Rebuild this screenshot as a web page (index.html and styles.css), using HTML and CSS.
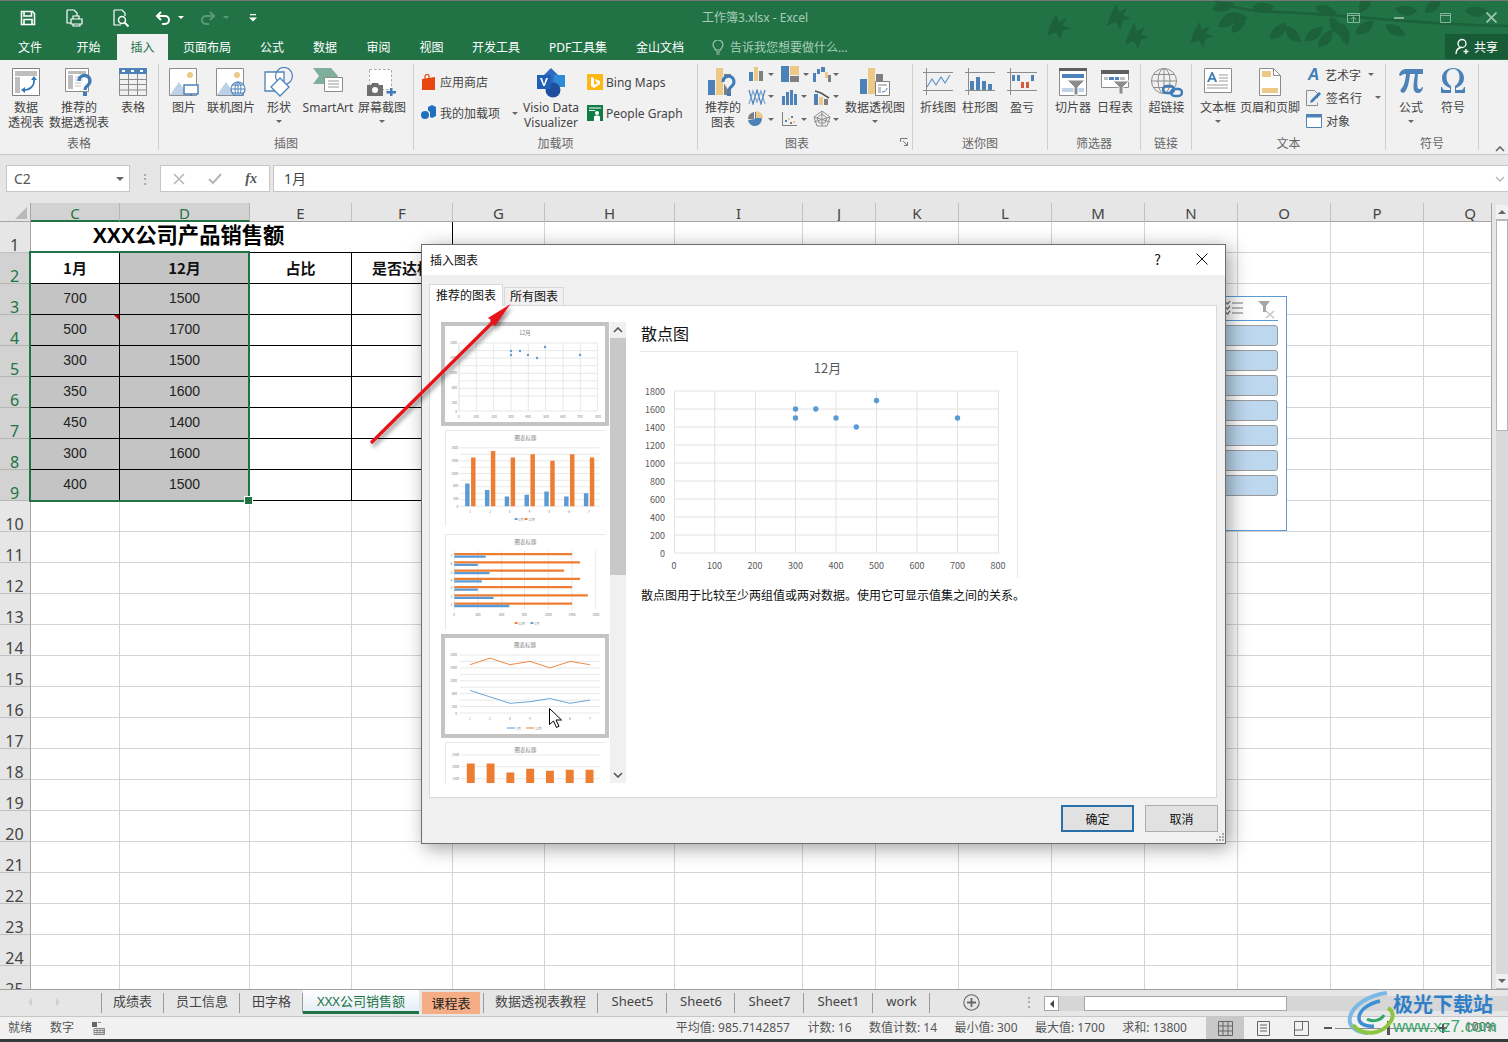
FILE: index.html
```html
<!DOCTYPE html>
<html lang="zh">
<head>
<meta charset="utf-8">
<title>工作簿3.xlsx - Excel</title>
<link rel="stylesheet" href="styles.css">
</head>
<body>
<div class="app">
  <svg class="leaves" viewBox="0 0 508 59" width="508" height="59" fill="#1c6139">
    <defs>
      <path id="bird" d="M0 0l6-12 3 8 8-4-4 7 8 4-8 1-3 10-4-8-9 4z"/>
      <path id="leaf" d="M0 0Q7-11 22-6 14 8 0 0z"/>
    </defs>
    <use href="#bird" x="50" y="25"/><use href="#bird" x="110" y="15"/><use href="#bird" x="128" y="34"/><use href="#bird" x="193" y="33"/>
    <path d="M215 0Q240 10 275 11T380 18T508 25" fill="none" stroke="#1c6139" stroke-width="2.5"/>
    <use href="#leaf" x="212" y="8"/><use href="#leaf" x="225" y="14" transform="rotate(25 225 14)"/><use href="#leaf" x="218" y="26" transform="rotate(-20 218 26)"/><use href="#leaf" x="232" y="32" transform="rotate(-40 232 32)"/><use href="#leaf" x="252" y="6" transform="rotate(15 252 6)"/><use href="#leaf" x="270" y="38" transform="rotate(-30 270 38)"/><use href="#leaf" x="285" y="25" transform="rotate(60 285 25)"/><use href="#leaf" x="315" y="6" transform="rotate(30 315 6)"/><use href="#leaf" x="330" y="16" transform="rotate(70 330 16)"/><use href="#leaf" x="342" y="22" transform="rotate(90 342 22)"/><use href="#leaf" x="305" y="40" transform="rotate(-25 305 40)"/><use href="#leaf" x="318" y="46" transform="rotate(-35 318 46)"/><use href="#leaf" x="355" y="33" transform="rotate(-20 355 33)"/><use href="#leaf" x="360" y="12" transform="rotate(-50 360 12)"/><use href="#leaf" x="395" y="8" transform="rotate(20 395 8)"/><use href="#leaf" x="425" y="12" transform="rotate(-30 425 12)"/><use href="#leaf" x="465" y="10" transform="rotate(15 465 10)"/><use href="#leaf" x="385" y="24" transform="rotate(40 385 24)"/>
  </svg>

  <header class="titlebar">
    <div class="qat">
      <span class="qa w46"><svg width="16" height="16" viewBox="0 0 16 16" fill="none" stroke="#fff" stroke-width="1.6"><path d="M1.500 1.500h11l2 2v11h-13z"/><path d="M4 1.500v4.500h7.500V1.500M4 14.500v-5h8v5"/></svg></span>
      <span class="qa w46"><svg width="17" height="18" viewBox="0 0 17 18" fill="none" stroke="#fff" stroke-width="1.200"><path d="M1 1h7l3 3v3M1 1v13h4"/><path d="M7 10V7h6v3M5 10h11v5H5zM7 15v2h7v-2"/></svg></span>
      <span class="qa w48"><svg width="17" height="18" viewBox="0 0 17 18" fill="none" stroke="#fff" stroke-width="1.200"><path d="M1 1h8l3 3v3M1 1v15h7"/><circle cx="9" cy="11" r="3.500" stroke-width="1.500"/><path d="M11.500 13.500l4 4" stroke-width="2"/></svg></span>
      <span class="qa undo"><svg width="16" height="14" viewBox="0 0 16 14" fill="none" stroke="#fff" stroke-width="2"><path d="M2 5h8a4 4 0 0 1 0 8H7"/><path d="M6 1L2 5l4 4"/></svg></span>
      <span class="qa w8"><i class="caret white"></i></span>
      <span class="qa redo"><svg width="16" height="14" viewBox="0 0 16 14" fill="none" stroke="#5a9a78" stroke-width="2"><path d="M14 5H6a4 4 0 0 0 0 8h3"/><path d="M10 1l4 4-4 4"/></svg></span>
      <span class="qa w8"><i class="caret dim"></i></span>
      <span class="qa custom"><svg width="8" height="8" viewBox="0 0 8 8" fill="#fff"><path d="M1 0h6v1.200H1zM0 3.500h8L4 7.500z"/></svg></span>
    </div>
    <div class="doctitle">工作簿3.xlsx - Excel</div>
    <div class="winbtns">
      <span class="wb"><svg width="13" height="10" viewBox="0 0 13 10" fill="none" stroke="#86b39b"><path d="M.5.500h12v9H.500zM.5 2.500h12M4 6l2.500-2L9 6M6.500 4v5"/></svg></span>
      <span class="wb"><svg width="10" height="2" viewBox="0 0 10 2" fill="#86b39b"><path d="M0 0h10v2H0z"/></svg></span>
      <span class="wb"><svg width="11" height="10" viewBox="0 0 11 10" fill="none" stroke="#86b39b"><path d="M.5.500h10v9H.500zM.5 2.500h10"/></svg></span>
      <span class="wb close"><svg width="11" height="11" viewBox="0 0 11 11" fill="none" stroke="#9cc3ae" stroke-width="1.800"><path d="M.5.500l10 10M10.500.500l-10 10"/></svg></span>
    </div>
  </header>

  <nav class="tabs">
    <span class="tab t60">文件</span><span class="tab t57">开始</span><span class="tab t51 on">插入</span><span class="tab t78">页面布局</span><span class="tab t52">公式</span><span class="tab t54">数据</span><span class="tab t53">审阅</span><span class="tab t53">视图</span><span class="tab t76">开发工具</span><span class="tab t88">PDF工具集</span><span class="tab t76">金山文档</span>
    <span class="tell"><svg width="12" height="15" viewBox="0 0 12 15" fill="none" stroke="#a8cdb8" stroke-width="1.100"><path d="M3.500 10C3 8 1 7 1 5a5 5 0 0 1 10 0c0 2-2 3-2.500 5zM4 12h4M4.500 14h3"/></svg>告诉我您想要做什么...</span>
    <span class="share"><svg width="16" height="17" viewBox="0 0 16 17" fill="none" stroke="#fff" stroke-width="1.300"><circle cx="7" cy="5.500" r="4"/><path d="M1 16c0-4 2.500-6 5-6.500M11 11v5M8.500 13.500h5"/></svg>共享</span>
  </nav>

  <section class="ribbon">
    <div class="group g1">
      <div class="gbody">
        <div class="big w44"><span class="ico"><svg width="28" height="28" viewBox="0 0 28 28"><path d="M.5.500h27v27H.500z" fill="#fff" stroke="#7f7f7f"/><path d="M3 3h22v5H3zM3 9h5v16H3z" fill="#bfbfbf"/><path d="M11 22c6 1 12-4 11-11" fill="none" stroke="#2f79b9" stroke-width="1.800"/><path d="M22 8l-3 4h6zM9 22l4-3v6z" fill="#2f79b9"/></svg></span><span class="lb">数据<br>透视表</span></div>
        <div class="big w62"><span class="ico"><svg width="28" height="28" viewBox="0 0 28 28"><path d="M.5.500h23v23H.500z" fill="#fff" stroke="#8c8c8c"/><path d="M3 3h18v3H3zM3 7h5v14H3z" fill="#bdbdbd"/><path d="M10 9h11M10 12h8M10 15h6M10 18h6" stroke="#bdbdbd"/><path d="M14 13a5.500 5.500 0 1 1 8.500 4.500c-2 1.500-2.500 2.500-2.500 4.500" fill="none" stroke="#3f7cb8" stroke-width="3.200"/><path d="M18 24h4v4h-4z" fill="#3f7cb8"/></svg></span><span class="lb">推荐的<br>数据透视表</span></div>
        <div class="big w46"><span class="ico"><svg width="28" height="28" viewBox="0 0 28 28"><path d="M0 0h28v6H0z" fill="#4d82b8"/><path d="M3 2h3v2H3zM12 2h3v2h-3zM21 2h3v2h-3z" fill="#fff"/><path d="M.5 6v21.500h27V6M.5 11.500h27M.5 16.500h27M.5 22h27M9.500 6v21M18.500 6v21" fill="none" stroke="#8c8c8c"/></svg></span><span class="lb">表格</span></div>
      </div>
      <div class="glabel">表格</div>
    </div>

    <div class="group g2">
      <div class="gbody">
        <div class="big w46"><span class="ico"><svg width="30" height="28" viewBox="0 0 30 28"><path d="M.5.500h27v27H.500z" fill="#fff" stroke="#8c8c8c"/><circle cx="21" cy="7" r="3" fill="#edc987"/><path d="M1 27l9-13 9 13z" fill="#bcd0e6"/><path d="M15 17h14v9H15z" fill="#fff" stroke="#4d82b8" stroke-width="1.500"/><path d="M21 26h2v2h3v.5h-8V28h3z" fill="#4d82b8"/></svg></span><span class="lb">图片</span></div>
        <div class="big w48"><span class="ico"><svg width="30" height="28" viewBox="0 0 30 28"><path d="M.5.500h27v27H.500z" fill="#fff" stroke="#8c8c8c"/><circle cx="21" cy="7" r="3" fill="#edc987"/><path d="M1 27l9-13 9 13z" fill="#bcd0e6"/><circle cx="22" cy="21" r="7" fill="#fff" stroke="#4d82b8" stroke-width="1.200"/><path d="M15 21h14M22 14v14M16.500 17h11M16.500 25h11" stroke="#4d82b8"/><ellipse cx="22" cy="21" rx="3" ry="7" fill="none" stroke="#4d82b8"/></svg></span><span class="lb">联机图片</span></div>
        <div class="big w48"><span class="ico up1"><svg width="30" height="30" viewBox="0 0 30 30"><path d="M1 5h19v19H1z" fill="#fff" stroke="#4d82b8" stroke-width="1.300"/><circle cx="20" cy="9" r="8.500" fill="none" stroke="#4d82b8" stroke-width="1.200"/><path d="M16 11l9 9-9 9-9-9z" fill="#fff" stroke="#4d82b8" stroke-width="1.300"/></svg></span><span class="lb">形状</span><i class="caret"></i></div>
        <div class="big w50"><span class="ico"><svg width="30" height="26" viewBox="0 0 30 26"><path d="M0 0h18l7 8-7 8H0l6-8z" fill="#7fae9b"/><path d="M11.500 9.500h18v14h-18z" fill="#fff" stroke="#8c8c8c"/><path d="M15 13h11M15 16h11M15 19h11" stroke="#9a9a9a"/></svg></span><span class="lb">SmartArt</span></div>
        <div class="big w58"><span class="ico"><svg width="30" height="28" viewBox="0 0 30 28"><path d="M2.500 1.500h22v20h-22z" fill="#fff" stroke="#aaa" stroke-dasharray="2.500 2"/><path d="M0 17h4l1-2h6l1 2h4v11H0z" fill="#6f6f6f"/><circle cx="8" cy="22" r="3" fill="#fff"/><path d="M23 20h2.500v3H29v2.500h-3.500V29H23v-3.500h-3.500V23H23z" fill="#3f7cb8"/></svg></span><span class="lb">屏幕截图</span><i class="caret"></i></div>
      </div>
      <div class="glabel">插图</div>
    </div>

    <div class="group g3">
      <div class="gbody">
        <div class="scol addins">
          <div class="sm"><svg width="16" height="16" viewBox="0 0 16 16"><path d="M1 5l13-2v13H1z" fill="#e8470f"/><path d="M4 6V2.500a2 2 0 0 1 4 0V5" fill="none" stroke="#e8470f" stroke-width="1.200"/></svg>应用商店</div>
          <div class="sm"><svg width="16" height="16" viewBox="0 0 16 16" fill="#1e6fc0"><path d="M7 2l4-2 4 2v9l-4 2-2-1V7L7 5.500z"/><circle cx="4" cy="10" r="4"/></svg>我的加载项<i class="caret sp"></i></div>
        </div>
        <div class="big w60"><span class="ico"><svg width="30" height="30" viewBox="0 0 30 30"><path d="M15 0l9 9-9 9-9-9z" fill="#2f6cc0"/><path d="M18 7h11v12H18z" fill="#2e8bd8"/><circle cx="17" cy="22" r="7.500" fill="#1d4f9c"/><path d="M1 7h14v14H1z" fill="#1f5fb5"/><path d="M4 10h2l2 6 2-6h2l-3.200 8H7.200z" fill="#fff"/></svg></span><span class="lb">Visio Data<br>Visualizer</span></div>
        <div class="scol maps">
          <div class="sm"><svg width="16" height="16" viewBox="0 0 16 16"><path d="M0 0h16v16H0z" fill="#fdb813"/><path d="M4 3l3 1v7l4-2-2-1-1-3 5 2v3l-6 4-3-2z" fill="#fff"/></svg>Bing Maps</div>
          <div class="sm"><svg width="16" height="16" viewBox="0 0 16 16"><path d="M0 0h16v16H0z" fill="#0f7b46"/><path d="M2 3h12M2 5.500h6" stroke="#fff"/><circle cx="10" cy="8" r="2" fill="#fff"/><path d="M7 16v-4c0-1 1-1.500 3-1.500s3 .5 3 1.500v4z" fill="#fff"/></svg>People Graph</div>
        </div>
      </div>
      <div class="glabel">加载项</div>
    </div>

    <div class="group g4">
      <div class="gbody">
        <div class="big w50"><span class="ico"><svg width="30" height="28" viewBox="0 0 30 28"><path d="M0 12h7v15H0z" fill="#4d82b8"/><path d="M8 0h7v27H8z" fill="#edc987"/><path d="M16 6h7v21h-7z" fill="#7f7f7f"/><path d="M15 14a5.500 5.500 0 1 1 9 4c-2 1.500-3 2.500-3 5" fill="#f1f1f1" stroke="#3f7cb8" stroke-width="3"/><path d="M19 24.500h4V28h-4z" fill="#3f7cb8"/></svg></span><span class="lb">推荐的<br>图表</span></div>
        <div class="minis">
          <div class="mini"><svg width="18" height="16" viewBox="0 0 18 16"><path d="M1 6h4v9H1z" fill="#4d82b8"/><path d="M6 1h4v14H6z" fill="#edc987"/><path d="M11 5h4v10h-4z" fill="#7f7f7f"/></svg><i class="caret"></i></div>
          <div class="mini"><svg width="20" height="16" viewBox="0 0 20 16"><path d="M0 0h8v16H0z" fill="#4d82b8"/><path d="M9 0h9v9H9z" fill="#edc987"/><path d="M9 10h9v6H9z" fill="#7f7f7f"/></svg><i class="caret"></i></div>
          <div class="mini"><svg width="18" height="16" viewBox="0 0 18 16"><path d="M0 7h3v9H0z" fill="#4d82b8"/><path d="M4 3h3v5H4z" fill="#4d82b8"/><path d="M8 1h4v5H8z" fill="#4d82b8"/><path d="M12 6h3v6h-3z" fill="#edc987"/><path d="M15 9h3v7h-3z" fill="#7f7f7f"/></svg><i class="caret"></i></div>
          <div class="mini"><svg width="18" height="16" viewBox="0 0 18 16" fill="none" stroke="#4d82b8" stroke-width="1.200"><path d="M1 1l4 14 4-14 4 14 4-14"/><path d="M1 15L5 2l4 11 4-11 4 13" stroke="#7aa6d6"/></svg><i class="caret"></i></div>
          <div class="mini"><svg width="18" height="16" viewBox="0 0 18 16" fill="#4d82b8"><path d="M1 7h3v9H1zM5 3h3v13H5zM9 1h3v15H9zM13 5h3v11h-3z"/></svg><i class="caret"></i></div>
          <div class="mini"><svg width="18" height="16" viewBox="0 0 18 16"><path d="M1 5h4v11H1z" fill="#4d82b8"/><path d="M6 8h4v8H6z" fill="#edc987"/><path d="M11 10h4v6h-4z" fill="#7f7f7f"/><path d="M2 2l6 2 8 5" fill="none" stroke="#555" stroke-width="1.500"/></svg><i class="caret"></i></div>
          <div class="mini"><svg width="18" height="16" viewBox="0 0 18 16"><path d="M7 1a7 7 0 1 1-7 8l7-1z" fill="#4d82b8"/><path d="M8 0a7 7 0 0 1 7 7H8z" fill="#edc987"/><path d="M0 8a7 7 0 0 1 6-7v7z" fill="#7f7f7f"/></svg><i class="caret"></i></div>
          <div class="mini"><svg width="18" height="16" viewBox="0 0 18 16"><path d="M1.500 1v13.500H16" fill="none" stroke="#7f7f7f"/><path d="M4 9h2v2H4zM10 5h2v2h-2z" fill="#4d82b8"/><path d="M7 7h2v2H7zM12 10h2v2h-2z" fill="#edc987"/><path d="M9 11h2v2H9z" fill="#7f7f7f"/></svg><i class="caret"></i></div>
          <div class="mini"><svg width="18" height="16" viewBox="0 0 18 16" fill="none" stroke="#8c8c8c"><path d="M9 0l8 6-3 9H4L1 6zM9 3l5 4-2 5H6L4 7zM9 0v15M1 6l16 5M17 6L1 11"/></svg><i class="caret"></i></div>
        </div>
        <div class="big w58"><span class="ico"><svg width="30" height="28" viewBox="0 0 30 28"><path d="M0 11h7v15H0z" fill="#4d82b8"/><path d="M8 0h7v26H8z" fill="#edc987"/><path d="M16 6h7v9h-7z" fill="#7f7f7f"/><path d="M15.500 13.500h14v14h-14z" fill="#fff" stroke="#7f7f7f"/><path d="M18 16h9v2h-9zM18 19h3v6h-3z" fill="#bfbfbf"/><path d="M22 24c3 0 5-2 5-4" fill="none" stroke="#3f7cb8"/></svg></span><span class="lb">数据透视图</span><i class="caret"></i></div>
        <svg class="launch" width="8" height="8" viewBox="0 0 8 8" fill="none" stroke="#777"><path d="M.5 4V.5H7.500M3 3l4 4M4 7.500h3.500V4"/></svg>
      </div>
      <div class="glabel shifted">图表</div>
    </div>

    <div class="group g5">
      <div class="gbody">
        <div class="big w42"><span class="ico"><svg width="30" height="27" viewBox="0 0 30 27" fill="none"><path d="M0 4.500h30M0 22.500h30M3.500 0v27" stroke="#8c8c8c"/><path d="M4 19l5-8 4 6 5-8 4 6 5-8" stroke="#5a90c8" stroke-width="1.100"/></svg></span><span class="lb">折线图</span></div>
        <div class="big w42"><span class="ico"><svg width="30" height="27" viewBox="0 0 30 27"><path d="M0 4.500h30M0 22.500h30M3.500 0v27" fill="none" stroke="#8c8c8c"/><path d="M5 13h4v9H5zM11 9h4v13h-4zM17 13h4v9h-4zM23 16h4v6h-4z" fill="#4d82b8"/></svg></span><span class="lb">柱形图</span></div>
        <div class="big w42"><span class="ico"><svg width="30" height="27" viewBox="0 0 30 27"><path d="M0 4.500h30M0 22.500h30M3.500 0v27" fill="none" stroke="#8c8c8c"/><path d="M5 7h3v6H5zM10 7h3v6h-3zM24 7h3v6h-3z" fill="#4d82b8"/><path d="M14 14h3v6h-3zM19 14h3v6h-3z" fill="#d9593c"/></svg></span><span class="lb">盈亏</span></div>
      </div>
      <div class="glabel">迷你图</div>
    </div>

    <div class="group g6">
      <div class="gbody">
        <div class="big w42"><span class="ico"><svg width="28" height="28" viewBox="0 0 28 28"><path d="M.5.500h27v27H.500z" fill="#fff" stroke="#8c8c8c"/><path d="M0 0h28v3H0z" fill="#5f5f5f"/><path d="M3 6h22v4H3z" fill="#4d82b8"/><path d="M3 20h22v4H3z" fill="#bfd3e8"/><path d="M8 12h18l-7 7v8h-4v-8z" fill="#8c8c8c" stroke="#fff"/></svg></span><span class="lb">切片器</span></div>
        <div class="big w42"><span class="ico"><svg width="28" height="26" viewBox="0 0 28 26"><path d="M.5 3.500h27v16H.500z" fill="#fff" stroke="#8c8c8c"/><path d="M0 2h28v4H0z" fill="#5f5f5f"/><path d="M3 9h4v3H3z" fill="#bfbfbf"/><path d="M8 9h5v3H8zM14 9h4v3h-4z" fill="#4d82b8"/><path d="M19 9h5v3h-5z" fill="#bfbfbf"/><path d="M12 13h16l-6 6v7h-4v-7z" fill="#8c8c8c" stroke="#f1f1f1"/></svg></span><span class="lb">日程表</span></div>
      </div>
      <div class="glabel">筛选器</div>
    </div>

    <div class="group g7">
      <div class="gbody">
        <div class="big w49"><span class="ico"><svg width="32" height="30" viewBox="0 0 32 30" fill="none"><g stroke="#8c8c8c"><circle cx="13" cy="13" r="12.500"/><ellipse cx="13" cy="13" rx="6" ry="12.500"/><path d="M13 0v26M.5 13h25M2.500 6.500h21M2.500 19.500h21"/></g><rect x="12" y="18" width="11" height="7" rx="3.500" stroke="#3f7cb8" stroke-width="2.500"/><rect x="20" y="21" width="11" height="7" rx="3.500" stroke="#3f7cb8" stroke-width="2.500"/></svg></span><span class="lb">超链接</span></div>
      </div>
      <div class="glabel">链接</div>
    </div>

    <div class="group g8">
      <div class="gbody">
        <div class="big w44"><span class="ico"><svg width="28" height="25" viewBox="0 0 28 25"><path d="M.5.500h27v24H.500z" fill="#fff" stroke="#8c8c8c"/><path d="M15 7h9M15 10h9M15 13h9M3 17h21M3 20h21" stroke="#9a9a9a"/><path d="M7.500 4L3 14h2.200l.9-2.200h4l.9 2.200h2.200L8.800 4zM6.800 10l1.300-3.300L9.400 10z" fill="#3f7cb8"/></svg></span><span class="lb">文本框</span><i class="caret"></i></div>
        <div class="big w60"><span class="ico"><svg width="22" height="28" viewBox="0 0 22 28"><path d="M.5.500h14l7 7v20H.500z" fill="#fff" stroke="#8c8c8c"/><path d="M14.500.5v7h7" fill="none" stroke="#8c8c8c"/><path d="M3 3h9v6H3zM3 20h16v5H3z" fill="#edc987"/></svg></span><span class="lb">页眉和页脚</span></div>
        <div class="scol texts">
          <div class="sm"><span class="wa">A</span>艺术字<i class="caret sp1"></i></div>
          <div class="sm"><svg width="16" height="16" viewBox="0 0 16 16" fill="none"><path d="M.5.500h8l3 3V8M.5.500v15h11v-3" stroke="#8c8c8c"/><path d="M4 13l1-3 8-8 2 2-8 8z" fill="#3f7cb8"/></svg>签名行<i class="caret sp2"></i></div>
          <div class="sm"><svg width="16" height="14" viewBox="0 0 16 14"><path d="M.5.500h15v13H.500z" fill="#fff" stroke="#4d82b8"/><path d="M0 0h16v3.500H0z" fill="#4d82b8"/></svg>对象</div>
        </div>
      </div>
      <div class="glabel">文本</div>
    </div>

    <div class="group g9">
      <div class="gbody">
        <div class="big w42"><span class="ico"><svg width="26" height="26" viewBox="0 0 26 26" fill="#4d82b8"><path d="M1 7C2 3 5 1 8 1h17v5h-5c-.5 5-1 9-.5 13 .2 1.500 1 2 2 2 1 0 2-.5 2.500-2h1c-.5 4-2.500 6-5 6-3 0-4.500-2-4.500-6 0-4 .8-9 1.500-13h-5c-.5 6-2 14-5 18-1 1-3 1-4 0s-.5-3 1-4c2-2 3.500-8 4-14H7c-2 0-3.500 1-4.500 2z"/></svg></span><span class="lb">公式</span><i class="caret"></i></div>
        <div class="big w42"><span class="ico"><svg width="26" height="26" viewBox="0 0 26 26" fill="#4d82b8"><path d="M1 25v-6h1c.5 2 1.500 3 3 3h5v-2C5 18 2 15 2 10 2 4 7 0 13 0s11 4 11 10c0 5-3 8-8 10v2h5c1.500 0 2.500-1 3-3h1v6H15v-7c3-2 4.500-5 4.500-9 0-5-2.500-8-6.500-8S6.500 4 6.500 9c0 4 1.500 7 4.500 9v7z"/></svg></span><span class="lb">符号</span></div>
      </div>
      <div class="glabel">符号</div>
    </div>
    <svg class="collapse" width="10" height="6" viewBox="0 0 10 6" fill="none" stroke="#666" stroke-width="1.600"><path d="M1 5l4-4 4 4"/></svg>
  </section>

  <section class="formula">
    <div class="namebox">C2<i class="caret"></i></div>
    <div class="fdots">⋮</div>
    <div class="fxbox">
      <svg width="12" height="12" viewBox="0 0 12 12" fill="none" stroke="#b5b5b5" stroke-width="1.500"><path d="M1 1l10 10M11 1L1 11"/></svg>
      <svg width="14" height="12" viewBox="0 0 14 12" fill="none" stroke="#b5b5b5" stroke-width="2"><path d="M1 6l4 4 8-9"/></svg>
      <span class="fx">fx</span>
    </div>
    <div class="finput"><span class="ftext">1月</span><svg width="10" height="6" viewBox="0 0 10 6" fill="none" stroke="#bbb" stroke-width="1.500"><path d="M1 1l4 4 4-4"/></svg></div>
  </section>

  <main class="sheetarea">
    <div class="sheet">
      <div class="corner"><svg width="12" height="12" viewBox="0 0 12 12" fill="#b9b9b9"><path d="M12 0v12H0z"/></svg></div>
      <div class="ch sel">C</div><div class="ch sel">D</div><div class="ch">E</div><div class="ch">F</div><div class="ch">G</div><div class="ch">H</div><div class="ch">I</div><div class="ch">J</div><div class="ch">K</div><div class="ch">L</div><div class="ch">M</div><div class="ch">N</div><div class="ch">O</div><div class="ch">P</div><div class="ch">Q</div>

      <div class="rh">1</div><b class="headline">XXX公司产品销售额</b><i class="f1"></i><i></i><i></i><i></i><i></i><i></i><i></i><i></i><i></i><i></i><i></i><i></i>
      <div class="rh sel">2</div><b class="k">1月</b><b class="k g">12月</b><b class="k">占比</b><b class="k nw">是否达标</b><i></i><i></i><i></i><i></i><i></i><i></i><i></i><i></i><i></i><i></i><i></i>
      <div class="rh sel">3</div><span class="k g">700</span><span class="k g">1500</span><i class="k"></i><i class="k"></i><i></i><i></i><i></i><i></i><i></i><i></i><i></i><i></i><i></i><i></i><i></i>
      <div class="rh sel">4</div><span class="k g note">500</span><span class="k g">1700</span><i class="k"></i><i class="k"></i><i></i><i></i><i></i><i></i><i></i><i></i><i></i><i></i><i></i><i></i><i></i>
      <div class="rh sel">5</div><span class="k g">300</span><span class="k g">1500</span><i class="k"></i><i class="k"></i><i></i><i></i><i></i><i></i><i></i><i></i><i></i><i></i><i></i><i></i><i></i>
      <div class="rh sel">6</div><span class="k g">350</span><span class="k g">1600</span><i class="k"></i><i class="k"></i><i></i><i></i><i></i><i></i><i></i><i></i><i></i><i></i><i></i><i></i><i></i>
      <div class="rh sel">7</div><span class="k g">450</span><span class="k g">1400</span><i class="k"></i><i class="k"></i><i></i><i></i><i></i><i></i><i></i><i></i><i></i><i></i><i></i><i></i><i></i>
      <div class="rh sel">8</div><span class="k g">300</span><span class="k g">1600</span><i class="k"></i><i class="k"></i><i></i><i></i><i></i><i></i><i></i><i></i><i></i><i></i><i></i><i></i><i></i>
      <div class="rh sel">9</div><span class="k g">400</span><span class="k g">1500</span><i class="k"></i><i class="k"></i><i></i><i></i><i></i><i></i><i></i><i></i><i></i><i></i><i></i><i></i><i></i>
      <div class="rh">10</div><i></i><i></i><i></i><i></i><i></i><i></i><i></i><i></i><i></i><i></i><i></i><i></i><i></i><i></i><i></i>
      <div class="rh">11</div><i></i><i></i><i></i><i></i><i></i><i></i><i></i><i></i><i></i><i></i><i></i><i></i><i></i><i></i><i></i>
      <div class="rh">12</div><i></i><i></i><i></i><i></i><i></i><i></i><i></i><i></i><i></i><i></i><i></i><i></i><i></i><i></i><i></i>
      <div class="rh">13</div><i></i><i></i><i></i><i></i><i></i><i></i><i></i><i></i><i></i><i></i><i></i><i></i><i></i><i></i><i></i>
      <div class="rh">14</div><i></i><i></i><i></i><i></i><i></i><i></i><i></i><i></i><i></i><i></i><i></i><i></i><i></i><i></i><i></i>
      <div class="rh">15</div><i></i><i></i><i></i><i></i><i></i><i></i><i></i><i></i><i></i><i></i><i></i><i></i><i></i><i></i><i></i>
      <div class="rh">16</div><i></i><i></i><i></i><i></i><i></i><i></i><i></i><i></i><i></i><i></i><i></i><i></i><i></i><i></i><i></i>
      <div class="rh">17</div><i></i><i></i><i></i><i></i><i></i><i></i><i></i><i></i><i></i><i></i><i></i><i></i><i></i><i></i><i></i>
      <div class="rh">18</div><i></i><i></i><i></i><i></i><i></i><i></i><i></i><i></i><i></i><i></i><i></i><i></i><i></i><i></i><i></i>
      <div class="rh">19</div><i></i><i></i><i></i><i></i><i></i><i></i><i></i><i></i><i></i><i></i><i></i><i></i><i></i><i></i><i></i>
      <div class="rh">20</div><i></i><i></i><i></i><i></i><i></i><i></i><i></i><i></i><i></i><i></i><i></i><i></i><i></i><i></i><i></i>
      <div class="rh">21</div><i></i><i></i><i></i><i></i><i></i><i></i><i></i><i></i><i></i><i></i><i></i><i></i><i></i><i></i><i></i>
      <div class="rh">22</div><i></i><i></i><i></i><i></i><i></i><i></i><i></i><i></i><i></i><i></i><i></i><i></i><i></i><i></i><i></i>
      <div class="rh">23</div><i></i><i></i><i></i><i></i><i></i><i></i><i></i><i></i><i></i><i></i><i></i><i></i><i></i><i></i><i></i>
      <div class="rh">24</div><i></i><i></i><i></i><i></i><i></i><i></i><i></i><i></i><i></i><i></i><i></i><i></i><i></i><i></i><i></i>
      <div class="rh">25</div><i></i><i></i><i></i><i></i><i></i><i></i><i></i><i></i><i></i><i></i><i></i><i></i><i></i><i></i><i></i>

      <div class="selection"><span class="handle"></span></div>

      <aside class="slicer">
        <div class="slhead">
          <svg width="17" height="14" viewBox="0 0 17 14" fill="none" stroke="#777"><path d="M6 2h11M6 7h11M6 12h11"/><path d="M0 1.500l1.500 1.500L4 0M0 6.500L1.500 8 4 5M0 11.500L1.500 13 4 10" stroke-width="1.300"/></svg>
          <svg width="17" height="18" viewBox="0 0 17 18"><path d="M0 0h12L8 5v6H5V5z" fill="#a6a6a6"/><path d="M8 10l8 7M16 10l-8 7" stroke="#c0c0c0" stroke-width="1.300"/></svg>
        </div>
        <div class="slitem"></div><div class="slitem"></div><div class="slitem"></div><div class="slitem"></div><div class="slitem"></div><div class="slitem"></div><div class="slitem"></div>
      </aside>
    </div>
    <div class="vscroll">
      <div class="vbtn"><i class="tri up"></i></div>
      <div class="vthumb"></div>
      <div class="vtrack"></div>
      <div class="vbtn"><i class="tri"></i></div>
    </div>
  </main>

  <section class="tabbar">
    <div class="tabnav"><i class="tri left"></i><i class="tri right"></i></div>
    <div class="sheets">
      <span class="st s63 first">成绩表</span><span class="st s76">员工信息</span><span class="st s63">田字格</span><span class="st s116 active">XXX公司销售额</span><span class="st s58 orange">课程表</span><span class="st s115 first">数据透视表教程</span><span class="st s69">Sheet5</span><span class="st s68">Sheet6</span><span class="st s69">Sheet7</span><span class="st s69">Sheet1</span><span class="st s57">work</span>
    </div>
    <svg class="addsheet" width="17" height="17" viewBox="0 0 17 17" fill="none" stroke="#666"><circle cx="8.500" cy="8.500" r="7.700" stroke-width="1.100"/><path d="M8.500 4v9M4 8.500h9" stroke-width="1.800"/></svg>
    <div class="tdots">⋮</div>
    <div class="hscroll">
      <div class="hbtn"><i class="tri left dark"></i></div>
      <div class="hgap"></div>
      <div class="hthumb"></div>
    </div>
  </section>

  <footer class="status">
    <span class="stleft">就绪</span><span class="stleft">数字</span>
    <svg class="macro" width="13" height="13" viewBox="0 0 13 13"><path d="M0 0h5v5H0z" fill="#666"/><path d="M2 6.500h10.500v6H2zM6 .5h3M2 8.500h10M2 10.500h10M5 6.500v6M8 6.500v6M11 6.500v6" fill="none" stroke="#888"/></svg>
    <div class="stats"><span>平均值: 985.7142857</span><span>计数: 16</span><span>数值计数: 14</span><span>最小值: 300</span><span>最大值: 1700</span><span>求和: 13800</span></div>
    <div class="views">
      <span class="vw on"><svg width="15" height="15" viewBox="0 0 15 15" fill="none" stroke="#666"><path d="M.5.500h14v14H.500zM.5 5h14M.5 10h14M5 .5v14M10 .5v14"/></svg></span>
      <span class="vw"><svg width="13" height="15" viewBox="0 0 13 15" fill="none" stroke="#666"><path d="M.5.500h12v14H.500zM3 4h7M3 7h7M3 10h7"/></svg></span>
      <span class="vw"><svg width="15" height="15" viewBox="0 0 15 15" fill="none" stroke="#666"><path d="M.5.500h14v14H.500zM.5 9h8V.5"/></svg></span>
    </div>
    <div class="zoomer"><i class="zminus"></i><div class="zline"><i class="zthumb"></i></div><i class="zplus"></i><span class="zpct">100%</span></div>
  </footer>
  <div class="bottomline"></div>

  <div class="dialog">
    <div class="dtitle"><span class="dname">插入图表</span><span class="dq">?</span><svg width="12" height="12" viewBox="0 0 12 12" fill="none" stroke="#111"><path d="M.5.500l11 11M11.500.500l-11 11"/></svg></div>
    <div class="dbody">
      <div class="dtabs"><span class="dtab on">推荐的图表</span><span class="dtab">所有图表</span></div>
      <div class="dpanel">
        <div class="listwrap">
          <div class="list">
            <div class="thumb on">
              <svg viewBox="0 0 160 96" width="160" height="96" class="mini-chart">
                <path d="M14 17h139M14 24.600h139M14 32h139M14 39.700h139M14 47.300h139M14 54.800h139M14 62.400h139M14 70h139M14 85h139" stroke="#e8e8e8" fill="none"/>
                <path d="M31.300 17v68M48.600 17v68M66 17v68M83.300 17v68M100.600 17v68M118 17v68M135.300 17v68M152.600 17v68" stroke="#e8e8e8" fill="none"/>
                <path d="M14 17v68" stroke="#ddd"/>
                <text x="80" y="9" class="tt">12月</text>
                <text x="12" y="18" class="ty">1800</text><text x="12" y="33" class="ty">1400</text><text x="12" y="48" class="ty">1000</text><text x="12" y="63" class="ty">600</text><text x="12" y="78" class="ty">200</text><text x="12" y="87" class="ty">0</text>
                <text x="14" y="92" class="tx">0</text><text x="31" y="92" class="tx">100</text><text x="49" y="92" class="tx">200</text><text x="66" y="92" class="tx">300</text><text x="83" y="92" class="tx">400</text><text x="101" y="92" class="tx">500</text><text x="118" y="92" class="tx">600</text><text x="135" y="92" class="tx">700</text><text x="153" y="92" class="tx">800</text>
                <g fill="#5b9bd5"><circle cx="66" cy="25" r="1.200"/><circle cx="66" cy="29" r="1.200"/><circle cx="75" cy="25" r="1.200"/><circle cx="83" cy="29" r="1.200"/><circle cx="92" cy="32" r="1.200"/><circle cx="100" cy="21" r="1.200"/><circle cx="135" cy="29" r="1.200"/></g>
              </svg>
            </div>
            <div class="thumb">
              <svg viewBox="0 0 160 96" width="160" height="96" class="mini-chart">
                <path d="M14 17h141M14 23.500h141M14 30h141M14 36.700h141M14 43h141M14 49.800h141M14 56.300h141M14 63h141M14 69.400h141M14 76h141" stroke="#e8e8e8" fill="none"/>
                <text x="80" y="9" class="tt">图表标题</text>
                <text x="12" y="18" class="ty">1800</text><text x="12" y="31" class="ty">1400</text><text x="12" y="44" class="ty">1000</text><text x="12" y="57" class="ty">600</text><text x="12" y="70" class="ty">200</text><text x="12" y="78" class="ty">0</text>
                <text x="24" y="83" class="tx">1</text><text x="44" y="83" class="tx">2</text><text x="64" y="83" class="tx">3</text><text x="84" y="83" class="tx">4</text><text x="104" y="83" class="tx">5</text><text x="124" y="83" class="tx">6</text><text x="144" y="83" class="tx">7</text>
                <g fill="#5b9bd5"><path d="M19 53.100h4.500V76H19zM39 59.600h4.500V76H39zM59 66.200h4.500V76H59zM79 64.500h4.500V76H79zM99 61.200h4.500V76H99zM119 66.200h4.500V76H119zM139 62.900h4.500V76H139z"/></g>
                <g fill="#ed7d31"><path d="M25 26.800h4.500V76H25zM45 20.300h4.500V76H45zM65 26.800h4.500V76H65zM85 23.600h4.500V76H85zM105 30.100h4.500V76H105zM125 23.600h4.500V76H125zM145 26.800h4.500V76H145z"/></g>
                <path d="M69 88h3v2h-3z" fill="#5b9bd5"/><path d="M79 88h3v2h-3z" fill="#ed7d31"/><text x="73" y="91" class="tl">1月</text><text x="83" y="91" class="tl">12月</text>
              </svg>
            </div>
            <div class="thumb">
              <svg viewBox="0 0 160 96" width="160" height="96" class="mini-chart">
                <path d="M8 16v59M32 16v59M56 16v59M79 16v59M103 16v59M127 16v59M151 16v59" stroke="#e8e8e8" fill="none"/>
                <text x="80" y="9" class="tt">图表标题</text>
                <text x="5" y="22" class="tx">7</text><text x="5" y="30" class="tx">6</text><text x="5" y="39" class="tx">5</text><text x="5" y="47" class="tx">4</text><text x="5" y="55" class="tx">3</text><text x="5" y="64" class="tx">2</text><text x="5" y="72" class="tx">1</text>
                <text x="8" y="82" class="tx">0</text><text x="32" y="82" class="tx">300</text><text x="56" y="82" class="tx">600</text><text x="79" y="82" class="tx">800</text><text x="103" y="82" class="tx">1000</text><text x="127" y="82" class="tx">1400</text><text x="151" y="82" class="tx">1800</text>
                <g fill="#ed7d31"><path d="M8 18.200h119v2.300H8zM8 26.500h127v2.300H8zM8 34.900h111v2.300H8zM8 43.100h127v2.300H8zM8 51.500h119v2.300H8zM8 59.800h135v2.300H8zM8 68.100h119v2.300H8z"/></g>
                <g fill="#5b9bd5"><path d="M8 20.700h31.800V23H8zM8 29h23.800v2.300H8zM8 37.400h35.700v2.300H8zM8 45.600h27.800v2.300H8zM8 54h23.800v2.300H8zM8 62.300h39.700v2.300H8zM8 70.600h55.600v2.300H8z"/></g>
                <path d="M69 88h3v2h-3z" fill="#ed7d31"/><path d="M85 88h3v2h-3z" fill="#5b9bd5"/><text x="73" y="91" class="tl">12月</text><text x="89" y="91" class="tl">1月</text>
              </svg>
            </div>
            <div class="thumb on">
              <svg viewBox="0 0 160 96" width="160" height="96" class="mini-chart">
                <path d="M15 17h140M15 23.400h140M15 29.900h140M15 36.300h140M15 42.800h140M15 49.200h140M15 55.600h140M15 62.100h140M15 68.500h140M15 75h140" stroke="#e8e8e8" fill="none"/>
                <text x="80" y="9" class="tt">图表标题</text>
                <text x="12" y="18" class="ty">1800</text><text x="12" y="31" class="ty">1400</text><text x="12" y="44" class="ty">1000</text><text x="12" y="57" class="ty">600</text><text x="12" y="70" class="ty">200</text><text x="12" y="77" class="ty">0</text>
                <text x="25" y="82" class="tx">1</text><text x="45" y="82" class="tx">2</text><text x="65" y="82" class="tx">3</text><text x="85" y="82" class="tx">4</text><text x="105" y="82" class="tx">5</text><text x="125" y="82" class="tx">6</text><text x="145" y="82" class="tx">7</text>
                <path d="M25 26.700L45 20.200 65 26.700 85 23.400 105 29.900 125 23.400 145 26.700" fill="none" stroke="#ed7d31" stroke-width=".9"/>
                <path d="M25 52.400L45 58.900 65 65.300 85 63.700 105 60.500 125 65.300 145 62.100" fill="none" stroke="#5b9bd5" stroke-width=".9"/>
                <path d="M62 90h8" stroke="#5b9bd5"/><path d="M81 90h8" stroke="#ed7d31"/><text x="71" y="92" class="tl">1月</text><text x="90" y="92" class="tl">12月</text>
              </svg>
            </div>
            <div class="thumb">
              <svg viewBox="0 0 160 96" width="160" height="96" class="mini-chart">
                <path d="M15 12h140M15 24h140M15 36h140" stroke="#e8e8e8" fill="none"/>
                <text x="80" y="9" class="tt">图表标题</text>
                <text x="13" y="13" class="ty">2500</text><text x="13" y="25" class="ty">2000</text><text x="13" y="37" class="ty">1500</text>
                <g fill="#ed7d31"><path d="M20.700 20.700h8V96h-8zM40.700 20.700h8V96h-8zM60.700 29.700h8V96h-8zM80.700 26h8V96h-8zM100.700 28h8V96h-8zM120.700 27h8V96h-8zM140.700 27h8V96h-8z"/></g>
              </svg>
            </div>
          </div>
          <div class="lscroll">
            <div class="lbtn"><svg width="10" height="6" viewBox="0 0 10 6" fill="none" stroke="#555" stroke-width="1.600"><path d="M1 5l4-4 4 4"/></svg></div>
            <div class="lthumb"></div>
            <div class="ltrack"></div>
            <div class="lbtn"><svg width="10" height="6" viewBox="0 0 10 6" fill="none" stroke="#555" stroke-width="1.600"><path d="M1 1l4 4 4-4"/></svg></div>
          </div>
        </div>
        <div class="preview">
          <h2 class="ptitle">散点图</h2>
          <svg class="mainchart" viewBox="0 0 378 227" width="378" height="227">
            <path d="M0 .5h377.500V227" fill="none" stroke="#e6e6e6"/>
            <text x="187.500" y="22" class="mt">12月</text>
            <path d="M34 40h325M34 58h325M34 76h325M34 94h325M34 112h325M34 130h325M34 148h325M34 166h325M34 184h325M34 202h325" stroke="#e2e2e2" fill="none"/>
            <path d="M34.500 40v162M74.800 40v162M115.500 40v162M155.500 40v162M196 40v162M236.500 40v162M277 40v162M317.500 40v162M358.500 40v162" stroke="#e2e2e2" fill="none"/>
            <g class="my"><text x="25" y="44">1800</text><text x="25" y="62">1600</text><text x="25" y="80">1400</text><text x="25" y="98">1200</text><text x="25" y="116">1000</text><text x="25" y="134">800</text><text x="25" y="152">600</text><text x="25" y="170">400</text><text x="25" y="188">200</text><text x="25" y="206">0</text></g>
            <g class="mx"><text x="34" y="218">0</text><text x="74.500" y="218">100</text><text x="115" y="218">200</text><text x="155.500" y="218">300</text><text x="196" y="218">400</text><text x="236.500" y="218">500</text><text x="277" y="218">600</text><text x="317.500" y="218">700</text><text x="358" y="218">800</text></g>
            <g fill="#5b9bd5"><circle cx="317.500" cy="67" r="2.700"/><circle cx="236.500" cy="49.500" r="2.700"/><circle cx="155.500" cy="67" r="2.700"/><circle cx="175.800" cy="58" r="2.700"/><circle cx="216.300" cy="76" r="2.700"/><circle cx="155.500" cy="58" r="2.700"/><circle cx="196" cy="67" r="2.700"/></g>
          </svg>
          <p class="pdesc">散点图用于比较至少两组值或两对数据。使用它可显示值集之间的关系。</p>
        </div>
      </div>
      <div class="dfoot"><button class="btn primary">确定</button><button class="btn">取消</button></div>
    </div>
    <svg class="grip" width="9" height="9" viewBox="0 0 9 9" fill="#aaa"><path d="M7 0h2v2H7zM4 3h2v2H4zM7 3h2v2H7zM1 6h2v2H1zM4 6h2v2H4zM7 6h2v2H7z"/></svg>
  </div>

  <svg class="arrow" width="160" height="160" viewBox="0 0 160 160">
    <path d="M11 148L133 27" stroke="#e8141b" stroke-width="3.200" fill="none"/>
    <path d="M150.500 9L128 23l3 2-1 1 2 2 3 3z" fill="#e8141b"/>
  </svg>

  <svg class="cursor" width="14" height="20" viewBox="0 0 14 20"><path d="M.5.500v16l4-3.500 3 6.500 2.500-1.200-3-6.300h5.500z" fill="#fff" stroke="#000"/></svg>

  <div class="watermark">
    <svg width="54" height="46" viewBox="0 0 54 46" fill="none">
      <path d="M40 2C22 4 6 14 3 26c-2 9 6 16 18 16" stroke="#7ab8e6" stroke-width="4"/>
      <path d="M33 10C20 13 12 20 12 27c0 6 7 9 15 8" stroke="#3d8fd6" stroke-width="3.500"/>
      <path d="M6 34c8 10 28 12 38-4 3-5 2-10-3-13" stroke="#8cc63f" stroke-width="4"/>
      <path d="M20 28c5 3 14 2 17-4" stroke="#2fa66a" stroke-width="3"/>
    </svg>
    <div class="wmtext"><div class="wm1">极光下载站</div><div class="wm2">www.xz7.com</div></div>
  </div>
</div>
</body>
</html>
```
FILE: styles.css
```css
* { box-sizing: border-box; }
html, body { margin: 0; padding: 0; }
body { font-family: "Noto Sans", "Noto Sans CJK SC", sans-serif; font-size: 12px; color: #444; background: #fff; }
.app { position: relative; width: 1508px; height: 1042px; overflow: hidden; display: flex; flex-direction: column; border-top: 1px solid #777; }

.leaves { position: absolute; right: 0; top: 0; z-index: 1; }
.titlebar { position: relative; height: 33px; background: #217346; display: flex; align-items: center; }
.tabs { position: relative; height: 26px; background: #217346; display: flex; align-items: stretch; color: #fff; }
.qat, .doctitle, .winbtns, .tab, .tell, .share { position: relative; z-index: 2; }
.qat { width: 702px; padding-left: 5px; display: flex; align-items: center; }
.qa { display: flex; justify-content: center; align-items: center; }
.w46 { width: 46px; } .w48 { width: 48px; } .w8 { width: 8px; }
.undo { width: 28px; margin-left: 4px; }
.redo { width: 28px; margin-left: 9px; }
.custom { width: 12px; margin-left: 17px; }
.doctitle { color: #a9cbb8; width: 112px; white-space: nowrap; line-height: 16px; }
.winbtns { margin-left: auto; display: flex; align-items: center; }
.wb { width: 46px; display: flex; justify-content: center; }
.wb.close { width: 34px; margin-left: 6px; }

.caret { display: inline-block; width: 0; height: 0; border-left: 3px solid transparent; border-right: 3px solid transparent; border-top: 3px solid #666; }
.caret.white { border-top-color: #fff; }
.caret.dim { border-top-color: #5a9a78; }

.tab { display: flex; align-items: center; justify-content: center; white-space: nowrap; }
.t60 { width: 60px; } .t57 { width: 57px; } .t51 { width: 51px; } .t78 { width: 78px; } .t52 { width: 52px; } .t54 { width: 54px; } .t53 { width: 53px; } .t76 { width: 76px; } .t88 { width: 88px; }
.tab.on { background: #f1f1f1; color: #217346; }
.tell { margin-left: 14px; display: flex; align-items: center; gap: 6px; color: #a8cdb8; white-space: nowrap; }
.share { margin-left: auto; width: 63px; margin-bottom: 1px; background: #185c37; display: flex; align-items: center; justify-content: center; gap: 3px; white-space: nowrap; color: #fff; }

.ribbon { height: 95px; background: #f1f1f1; border-bottom: 1px solid #c6c6c6; padding-top: 4px; display: flex; align-items: flex-start; }
.group { height: 86px; border-right: 1px solid #cfcfcf; display: flex; flex-direction: column; flex: none; }
.g1 { width: 159px; } .g2 { width: 255px; } .g3 { width: 284px; } .g4 { width: 215px; } .g5 { width: 135px; } .g6 { width: 93px; } .g7 { width: 51px; } .g8 { width: 194px; } .g9 { width: 93px; }
.gbody { height: 71px; display: flex; position: relative; }
.g1 .gbody { padding-left: 4px; }
.g2 .gbody { padding-left: 2px; }
.g5 .gbody, .g6 .gbody, .g8 .gbody, .g9 .gbody { padding-left: 4px; }
.g7 .gbody { padding-left: 1px; }
.glabel { height: 15px; line-height: 15px; padding-top: 1px; text-align: center; color: #666; }
.glabel.shifted { padding-right: 16px; }
.big { display: flex; flex-direction: column; align-items: center; flex: none; padding-top: 4px; }
.w42 { width: 42px; } .w44 { width: 44px; } .w49 { width: 49px; } .w50 { width: 50px; } .w58 { width: 58px; } .w60 { width: 60px; } .w62 { width: 62px; }
.ico { height: 32px; display: flex; align-items: flex-start; justify-content: center; }
.ico.up1 { margin-top: -1px; height: 33px; }
.lb { line-height: 15px; text-align: center; white-space: nowrap; }
.big > .caret { margin-top: 5px; }
.scol { display: flex; flex-direction: column; flex: none; }
.sm { display: flex; align-items: center; white-space: nowrap; }
.addins { width: 107px; padding: 7px 0 0 7px; gap: 9px; }
.addins .sm, .maps .sm { height: 22px; gap: 3px; }
.maps { padding: 7px 0 0 6px; gap: 9px; }
.sp { margin-left: 9px; }
.minis { width: 98px; margin-top: -1px; display: grid; grid-template-columns: repeat(3, 32.600px); grid-auto-rows: 22.500px; align-items: center; flex: none; }
.mini { display: flex; align-items: center; gap: 2px; }
.launch { position: absolute; right: 4px; bottom: -11px; }
.texts { padding-left: 6px; margin-top: -1px; }
.texts .sm { height: 23px; gap: 4px; }
.sp1 { margin-left: 3px; } .sp2 { margin-left: 9px; }
.wa { width: 15px; text-align: center; font: italic 700 16px/20px "Liberation Sans", sans-serif; color: #3f7cb8; }
.collapse { align-self: flex-end; margin: 0 0 2px 16px; }

.formula { height: 48px; background: #e6e6e6; padding: 10px 0 11px 6px; display: flex; flex: none; }
.namebox { width: 124px; background: #fff; border: 1px solid #c6c6c6; display: flex; align-items: center; justify-content: space-between; padding: 0 5px 0 7px; font-size: 14px; color: #555; }
.namebox .caret { border-left-width: 4px; border-right-width: 4px; border-top-width: 4px; }
.fdots { width: 30px; text-align: center; color: #999; font-size: 14px; line-height: 27px; }
.fxbox { width: 110px; margin-right: 3px; background: #fff; border: 1px solid #c6c6c6; display: flex; align-items: center; justify-content: space-between; padding: 0 12px 0 12px; }
.fx { font-family: "Liberation Serif", serif; font-style: italic; font-weight: 700; font-size: 14px; color: #555; }
.finput { flex: 1; background: #fff; border: 1px solid #c6c6c6; border-right: 0; display: flex; align-items: center; justify-content: space-between; padding: 0 3px 0 10px; font-size: 14px; color: #444; }
.ftext { padding-bottom: 2px; }

.sheetarea { flex: 1; min-height: 0; display: flex; background: #fff; }
.sheet { position: relative; flex: 1; min-width: 0; overflow: hidden; display: grid; align-content: start; border-right: 1px solid #a6a6a6; font-family: "Liberation Sans", "Noto Sans CJK SC", sans-serif;
  grid-template-columns: 31px 89px 130px 102px 101px 92px 130px 128px 73px 83px 93px 93px 93px 93px 93px 93px;
  grid-template-rows: 19px 31px repeat(24, 31px); }
.sheet i { display: block; border-right: 1px solid #d4d4d4; border-bottom: 1px solid #d4d4d4; }
.corner { background: #e6e6e6; border-right: 1px solid #a6a6a6; border-bottom: 1px solid #a6a6a6; display: flex; justify-content: flex-end; padding: 4px 3px 0 0; }
.ch { background: #e6e6e6; border-right: 1px solid #c0c0c0; border-bottom: 1px solid #a6a6a6; text-align: center; font: 15px/19px "Noto Sans", sans-serif; color: #444; padding-top: 1px; overflow: hidden; }
.ch.sel { background: #d2d2d2; color: #217346; border-bottom: 2px solid #217346; border-right-color: #b5b5b5; }
.rh { background: #e6e6e6; border-right: 1px solid #a6a6a6; border-bottom: 1px solid #c0c0c0; padding-right: 1px; text-align: center; font: 16px/14px "Noto Sans", sans-serif; color: #444; display: flex; align-items: flex-end; justify-content: center; }
.rh.sel { background: #d2d2d2; color: #217346; border-bottom-color: #b5b5b5; }
.sheet .k, .sheet b, .sheet span { display: flex; align-items: center; justify-content: center; min-width: 0; color: #222; font-size: 14px; }
.sheet .k { border-right: 1px solid #000; border-bottom: 1px solid #000; position: relative; background: #fff; padding-bottom: 2px; }
.sheet b.k { font-size: 15px; font-family: "Noto Sans CJK SC", sans-serif; color: #111; }
.sheet .g { background: #c4c4c4; }
.nw { white-space: nowrap; overflow: hidden; }
.sheet .headline { grid-column: span 3; border-bottom: 1px solid #000; font-size: 21.300px; font-family: "Liberation Sans", "Noto Sans CJK SC", sans-serif; color: #000; padding: 0 6px 2px 0; white-space: nowrap; line-height: 26px; }
.sheet i.f1 { border-right: 1px solid #000; border-bottom: 1px solid #000; }
.note::after { content: ""; position: absolute; right: 0; top: 0; border-top: 5px solid #c00000; border-left: 5px solid transparent; }
.selection { position: absolute; left: 29px; top: 48px; width: 221px; height: 251px; border: 2px solid #217346; }
.sheet .handle { position: absolute; right: -5px; bottom: -5px; width: 7px; height: 7px; background: #217346; border: 1px solid #fff; box-sizing: content-box; display: block; }
.slicer { position: absolute; left: 1100px; top: 93px; width: 187px; height: 235px; background: #fff; border: 1px solid #5b9bd5; padding: 0 8px 0 0; display: flex; flex-direction: column; gap: 4px; }
.slhead { height: 24px; flex: none; border-bottom: 1px solid #5b9bd5; display: flex; justify-content: flex-end; gap: 15px; padding: 4px 3px 0 0; }
.slitem { height: 21px; flex: none; background: #bdd7ee; border: 1px solid #9a9a9a; border-radius: 3px; }

.vscroll { width: 16px; flex: none; display: flex; flex-direction: column; background: #d9d9d9; border-left: 4px solid #e6e6e6; border-top: 2px solid #e6e6e6; }
.vbtn { height: 15px; flex: none; background: #f1f1f1; display: flex; align-items: center; justify-content: center; border-bottom: 1px solid #bbb; }
.vthumb { height: 211px; flex: none; background: #fff; border: 1px solid #b5b5b5; }
.vtrack { flex: 1; }
.tri { display: block; width: 0; height: 0; border-left: 4px solid transparent; border-right: 4px solid transparent; border-top: 4px solid #666; }
.tri.up { border-top: 0; border-bottom: 4px solid #666; }
.tri.left, .tri.right { border-top: 4px solid transparent; border-bottom: 4px solid transparent; }
.tri.left { border-left: 0; border-right: 4px solid #cfcfcf; }
.tri.right { border-right: 0; border-left: 4px solid #cfcfcf; }
.tri.left.dark { border-right-color: #444; }

.tabbar { height: 28px; flex: none; background: #e6e6e6; border-top: 1px solid #9e9e9e; border-bottom: 1px solid #c6c6c6; display: flex; align-items: flex-start; position: relative; }
.tabnav { width: 101px; height: 24px; display: flex; align-items: center; padding-left: 28px; gap: 24px; flex: none; }
.sheets { display: flex; height: 24px; flex: none; }
.st { position: relative; display: flex; align-items: center; justify-content: center; font-size: 13px; line-height: 20px; padding-bottom: 2px; color: #444; white-space: nowrap; flex: none; }
.st::after { content: ""; position: absolute; right: 0; top: 3px; bottom: 1px; border-right: 1px solid #9a9a9a; }
.st.first::before { content: ""; position: absolute; left: 0; top: 3px; bottom: 1px; border-left: 1px solid #9a9a9a; }
.s63 { width: 63px; } .s76 { width: 76px; } .s116 { width: 116px; } .s58 { width: 58px; margin-left: 3px; } .s115 { width: 115px; margin-left: 3px; } .s69 { width: 69px; } .s68 { width: 68px; } .s57 { width: 57px; }
.st.active { color: #217346; background: linear-gradient(#fff, #e4eef5); border-bottom: 3px solid #217346; padding-bottom: 0; }
.st.active::after, .st.orange::after { display: none; }
.st.orange { background: #f4ad84; color: #222; margin-top: 2px; height: 22px; padding-bottom: 1px; }
.addsheet { margin: 4px 0 0 33px; flex: none; }
.tdots { width: 17px; margin-left: 40px; color: #999; line-height: 24px; font-size: 14px; text-align: center; flex: none; }
.hscroll { margin: 6px 0 0 7px; flex: 1; height: 15px; background: #d6d6d6; display: flex; }
.hbtn { width: 15px; background: #fff; border: 1px solid #a6a6a6; display: flex; align-items: center; justify-content: center; flex: none; }
.hgap { width: 25px; flex: none; }
.hthumb { width: 203px; flex: none; background: #fff; border: 1px solid #a6a6a6; }

.status { height: 22px; flex: none; background: #f1f1f1; display: flex; align-items: center; color: #555; position: relative; white-space: nowrap; }
.stleft { margin-left: 8px; width: 34px; padding-bottom: 3px; }
.macro { margin-left: 8px; }
.stats { margin-left: auto; display: flex; gap: 17.500px; padding-bottom: 3px; }
.views { margin-left: 19px; display: flex; height: 22px; width: 114px; flex: none; }
.vw { flex: 1; display: flex; align-items: center; justify-content: center; }
.vw.on { background: #c8c8c8; }
.zoomer { width: 188px; flex: none; display: flex; align-items: center; padding-left: 4px; }
.zminus { display: block; width: 8px; height: 2px; background: #555; flex: none; }
.zline { width: 100px; height: 1px; background: #8c8c8c; margin: 0 3px; position: relative; flex: none; }
.zthumb { position: absolute; left: 52px; top: -7px; width: 3px; height: 14px; background: #555; display: block; }
.zplus { display: block; width: 9px; height: 9px; flex: none; background: linear-gradient(#555,#555) center/9px 2px no-repeat, linear-gradient(#555,#555) center/2px 9px no-repeat; }
.zpct { margin-left: 18px; color: #555; padding-bottom: 3px; }
.bottomline { height: 3px; flex: none; background: #333c38; }

.dialog { position: absolute; z-index: 5; left: 421px; top: 243px; width: 805px; height: 600px; background: #f0f0f0; border: 1px solid #6e6e6e; box-shadow: 4px 4px 18px rgba(0,0,0,.38); display: flex; flex-direction: column; font-family: "Noto Sans CJK SC", sans-serif; color: #111; }
.dtitle { height: 30px; flex: none; background: #fff; display: flex; align-items: center; padding: 0 17px 2px 8px; }
.dq { margin-left: auto; margin-right: 35px; font-size: 14px; }
.dbody { flex: 1; padding: 9px 8px 0 7px; display: flex; flex-direction: column; min-height: 0; }
.dtabs { height: 21px; display: flex; align-items: flex-end; flex: none; }
.dtab { height: 18px; width: 60px; background: #f0f0f0; border: 1px solid #d9d9d9; border-bottom: 0; text-align: center; line-height: 16px; margin-left: 1px; }
.dtab.on { height: 22px; width: 74px; background: #fff; margin-left: 0; line-height: 20px; position: relative; z-index: 1; margin-bottom: -1px; }
.dpanel { height: 493px; flex: none; background: #fff; border: 1px solid #d9d9d9; padding: 16px 0 0 11px; display: flex; gap: 15px; }
.listwrap { display: flex; height: 461px; flex: none; gap: 1px; }
.list { width: 168px; overflow: hidden; flex: none; }
.thumb { height: 104px; border: 4px solid transparent; }
.thumb.on { border-color: #c4c4c4; }
.thumb svg { display: block; }
.thumb:not(.on) svg { border-top: 1px solid #e9e9e9; border-left: 1px solid #e9e9e9; }
.lscroll { width: 16px; background: #f0f0f0; display: flex; flex-direction: column; flex: none; }
.lbtn { height: 16px; flex: none; display: flex; align-items: center; justify-content: center; }
.lthumb { height: 237px; flex: none; background: #c8c8c8; }
.ltrack { flex: 1; }
.preview { margin: -1px 0 0 -1px; flex: 1; min-width: 0; }
.ptitle { margin: 0 0 6px; padding-left: 1px; font-size: 16px; line-height: 24px; font-weight: 400; color: #111; }
.mainchart { display: block; }
.pdesc { margin: 9px 0 0 1px; font-size: 12px; line-height: 16px; white-space: nowrap; color: #111; }
.mt { font-size: 13px; fill: #595959; text-anchor: middle; }
.my text { font-size: 9px; fill: #595959; text-anchor: end; }
.mx text { font-size: 9px; fill: #595959; text-anchor: middle; }
.tt { font-size: 5.500px; fill: #7f7f7f; text-anchor: middle; }
.ty { font-size: 3.200px; fill: #7f7f7f; text-anchor: end; }
.tx { font-size: 3.200px; fill: #7f7f7f; text-anchor: middle; }
.tl { font-size: 3.200px; fill: #7f7f7f; }
.dfoot { flex: 1; display: flex; justify-content: flex-end; gap: 11px; padding-top: 7px; margin-right: -1px; align-items: flex-start; }
.btn { width: 73px; height: 27px; background: #e1e1e1; border: 1px solid #adadad; font: 12px "Noto Sans CJK SC", sans-serif; color: #111; padding: 0; }
.btn.primary { border: 2px solid #2a6fa8; }
.grip { position: absolute; right: 1px; bottom: 1px; }

.arrow { position: absolute; z-index: 6; left: 360px; top: 294px; filter: drop-shadow(2px 3px 2px rgba(0,0,0,.45)); }
.cursor { position: absolute; z-index: 7; left: 549px; top: 707px; }
.watermark { position: absolute; z-index: 8; left: 1347px; top: 990px; display: flex; align-items: flex-start; white-space: nowrap; }
.wmtext { margin-top: 1px; margin-left: -8px; }
.wm1 { font-size: 20px; line-height: 24px; font-weight: 700; color: #2f7fc8; font-family: "Noto Sans CJK SC", sans-serif; }
.wm2 { font-size: 17px; line-height: 20px; color: #3aa76d; margin-top: 1px; font-family: "Liberation Sans", sans-serif; }
```
